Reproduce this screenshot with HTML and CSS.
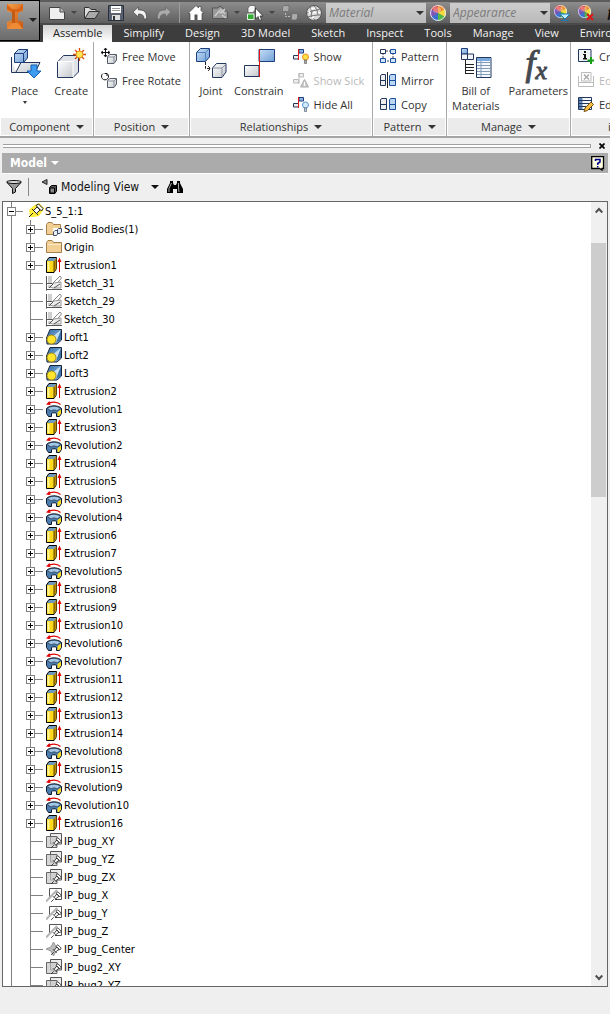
FILE: index.html
```html
<!DOCTYPE html>
<html lang="en">

<head>
    <meta charset="utf-8">
    <title>Model</title>
    <link rel="stylesheet" href="styles.css">
</head>

<body>
    <svg class="sprite" aria-hidden="true">
        <defs>
            <linearGradient id="g-blue" x1="0" y1="0" x2="1" y2="1">
                <stop offset="0" stop-color="#c8def5" />
                <stop offset="1" stop-color="#6f9fd6" />
            </linearGradient>
            <linearGradient id="g-grey" x1="0" y1="0" x2="1" y2="1">
                <stop offset="0" stop-color="#ffffff" />
                <stop offset="1" stop-color="#c3c7cc" />
            </linearGradient>
            <linearGradient id="g-orange" x1="0" y1="0" x2="1" y2="1">
                <stop offset="0" stop-color="#f6a04a" />
                <stop offset="1" stop-color="#c8560f" />
            </linearGradient>
            <linearGradient id="g-loft" x1="0" y1="0" x2="1" y2="1">
                <stop offset="0" stop-color="#2f6ca8" />
                <stop offset="1" stop-color="#9cc4e6" />
            </linearGradient>
        </defs>

        <symbol id="ball" viewBox="0 0 16 16">
            <path d="M8 8V0A8 8 0 0 1 15 4Z" fill="#f08a2c" />
            <path d="M8 8L15 4A8 8 0 0 1 15 12Z" fill="#f5dc3c" />
            <path d="M8 8L15 12A8 8 0 0 1 8 16Z" fill="#52b848" />
            <path d="M8 8V16A8 8 0 0 1 1 12Z" fill="#3b6fd0" />
            <path d="M8 8L1 12A8 8 0 0 1 1 4Z" fill="#7d55b8" />
            <path d="M8 8L1 4A8 8 0 0 1 8 0Z" fill="#dd4040" />
            <circle cx="8" cy="8" r="7.500" fill="none" stroke="#e4e8f0" />
            <ellipse cx="7" cy="5" rx="4" ry="3" fill="#fff" opacity=".3" />
        </symbol>

        <symbol id="pin" viewBox="0 0 16 16">
            <path d="M5 11L1.500 14.500M4 7L9 12M5.500 8.500L9 4L12 7L7.500 10.500M8 3L13 8L15 5.500L10.500 1Z" fill="#fff" stroke="#111" />
        </symbol>

        <symbol id="t-root" viewBox="0 0 16 16">
            <path d="M1 7L4 4L7 2L11 0L16 5L14 9L11 13L6 14H2Z" fill="#ffee3a" />
            <path d="M5 10L1 14M4 6L10 12M5.500 7.500L9 4L12 7L8.500 10.500M8 2.500L13.500 8L15 5.500L10.500 1Z" fill="#fff" stroke="#222" />
        </symbol>
        <symbol id="t-folder" viewBox="0 0 16 16">
            <path d="M.5 13.500V3.500L2 1.500H6L7.500 3.500H15.500V13.500Z" fill="#f2cf95" stroke="#a4804a" />
            <path d="M1.500 5.500H15" stroke="#fbe7c3" />
        </symbol>
        <symbol id="t-bodies" viewBox="0 0 16 16">
            <path d="M.5 13.500V3.500L2 1.500H6L7.500 3.500H14.500V13.500Z" fill="#f2cf95" stroke="#a4804a" />
            <path d="M7 7H16V16H7Z" fill="#fff" />
            <path d="M7.500 11L9 9.500H11.500V13L10.500 14.500H7.500Z" fill="#eef2fa" stroke="#3f4c66" />
            <path d="M11.500 8.500L12.500 7.500H15.500V11L14 12.500H11.500Z" fill="#dfe6f4" stroke="#3f4c66" />
        </symbol>
        <symbol id="t-extrusion" viewBox="0 0 16 16">
            <path d="M.5 4L3 .5H10.500V11.500L8 15.500H.5Z" fill="#6f98c0" stroke="#000" />
            <path d="M8 4L10.500 1V11.500L8 15Z" fill="#b98c00" />
            <path d="M1 4H8V15H1Z" fill="#ffd91c" />
            <path d="M2.500 5V14" stroke="#fff39a" stroke-width="2" />
            <path d="M8 4V15" stroke="#5c4500" />
            <path d="M13.500 15V3" stroke="#d40000" />
            <path d="M11.500 5L13.500 .5L15.500 5Z" fill="#e00000" />
        </symbol>
        <symbol id="t-sketch" viewBox="0 0 16 16">
            <path d="M.5 1V15.500M.5 14.500H16M1 8.500H9" stroke="#555" fill="none" />
            <path d="M2 1H6V8H2ZM2 10H5V13H2Z" fill="#cfcfcf" />
            <path d="M6 9L14 1L15.500 3L9 11Z" fill="#fff" stroke="#888" />
            <path d="M4 12L8 8L15 7V13H7Z" fill="#ededed" stroke="#999" />
            <path d="M3 13L7 9M8 13L14 9" stroke="#555" />
        </symbol>
        <symbol id="t-loft" viewBox="0 0 16 16">
            <path d="M4 .5H15.500V11L11 15H1L.5 9Z" fill="url(#g-loft)" stroke="#16243a" />
            <path d="M15 1L6 8L10 14Z" fill="#c5dff2" />
            <path d="M15 1V11L10 14Z" fill="#3c75ab" />
            <circle cx="5.500" cy="10.500" r="4.500" fill="#ffe42d" stroke="#a08a10" />
        </symbol>
        <symbol id="t-revolution" viewBox="0 0 16 16">
            <path d="M.5 7.500C3 4 13 4 15.500 7.500V12.500L13.500 15.500H10.500V12.500C9.500 11.500 6.500 11.500 5.500 12.500V15.500H2.500L.5 12.500Z" fill="#4a7cae" stroke="#0b1626" />
            <path d="M1.500 7.500C4 4.500 12 4.500 14.500 7.500L11 10C9 8.500 7 8.500 5 10Z" fill="#a3c8e6" stroke="#0b1626" stroke-width=".6" />
            <path d="M11.500 11L15 8.500V12.500L13 15H11.500Z" fill="#ffdf1f" />
            <path d="M2 3C5 .5 11 .5 14.500 3.500" fill="none" stroke="#e00000" stroke-width="1.200" />
            <path d="M0 3.500L3.500 0L4.500 4Z" fill="#e00000" />
        </symbol>
        <symbol id="t-plane" viewBox="0 0 16 16">
            <path d="M4.500 .5H15.500V11H4.500Z" fill="#ececec" stroke="#555" />
            <path d="M.5 3.500H11V14.500H.5Z" fill="#c4c4c4" fill-opacity=".7" stroke="#666" />
            <use href="#pin" x="4" y="4" width="12" height="12" />
        </symbol>
        <symbol id="t-axis" viewBox="0 0 16 16">
            <path d="M3.500 12V1.500H15.500V12.500H9" fill="#fff" stroke="#555" />
            <path d="M0 14.500L11 3" stroke="#b5b5b5" stroke-width="2" />
            <use href="#pin" x="4" y="4" width="12" height="12" />
        </symbol>
        <symbol id="t-point" viewBox="0 0 16 16">
            <path d="M7.500 1L10 6L15 8L10 10L7.500 15L5 10L0 8L5 6Z" fill="#bdbdbd" stroke="#999" />
            <use href="#pin" x="4" y="3" width="12" height="12" />
        </symbol>
    </svg>

    <header class="titlebar">
        <button class="app-button" aria-label="Application menu">
            <svg width="18" height="26" viewBox="0 0 18 26">
                <path d="M1 1H17V8L12 10V17L17 19V26H1V19L6 17V10L1 8Z" fill="url(#g-orange)" />
                <path d="M1 1L6 6H12L17 1V7L12 9H6L1 7Z" fill="#d76417" />
                <path d="M1 26L6 20H12L17 26Z" fill="#ef8a35" />
                <path d="M6 8H9V20H6Z" fill="#c05a14" />
            </svg>
            <i class="caret"></i>
        </button>
        <div class="title-rows">
            <div class="quick-access">
                <button class="tool" aria-label="New">
                    <svg viewBox="0 0 16 16">
                        <path d="M.5 2.500H11L15.500 7V14.500H.5Z" fill="#eee" stroke="#444" />
                        <path d="M11 2.500V7H15.500" fill="#bbb" stroke="#444" />
                    </svg>
                </button>
                <button class="drop" aria-label="New options"><i class="caret dim"></i></button>
                <button class="tool" aria-label="Open">
                    <svg viewBox="0 0 16 16">
                        <path d="M.5 13.500V2.500H5L7 4.500H12V7" fill="#ddd" stroke="#333" />
                        <path d="M1 13.500L5 6.500H15.500L11 13.500Z" fill="#aaa" stroke="#333" />
                    </svg>
                </button>
                <button class="tool" aria-label="Save">
                    <svg viewBox="0 0 16 16">
                        <path d="M.5 .5H15.500V15.500H.5Z" fill="#59626e" stroke="#27303a" />
                        <path d="M3 1H13V8H3Z" fill="#fff" />
                        <path d="M4 3.500H12M4 5.500H12" stroke="#999" />
                        <path d="M4 10H12V15H4Z" fill="#ddd" />
                        <path d="M5 11H7V15H5Z" fill="#333" />
                    </svg>
                </button>
                <button class="tool" aria-label="Undo">
                    <svg viewBox="0 0 16 16">
                        <path d="M1 7L6.500 2V5C12 4.500 15 7 14.500 14H12C12 10.500 10.500 9 6.500 9V12Z" fill="#f4f4f4" stroke="#444" stroke-width=".7" />
                    </svg>
                </button>
                <button class="tool" aria-label="Redo">
                    <svg viewBox="0 0 16 16">
                        <path d="M15 7L9.500 2V5C4 4.500 1 7 1.500 14H4C4 10.500 5.500 9 9.500 9V12Z" fill="#aaa" stroke="#666" stroke-width=".7" />
                    </svg>
                </button>
                <span class="divider"></span>
                <button class="tool" aria-label="Home">
                    <svg viewBox="0 0 16 16">
                        <path d="M0 8.500L8 .5L10.500 3V1.500H13V5.500L16 8.500H14V15.500H2V8.500Z" fill="#fff" stroke="#444" stroke-width=".7" />
                        <path d="M6.500 15V9.500H9.500V15Z" fill="#555" />
                    </svg>
                </button>
                <button class="tool" aria-label="Update">
                    <svg viewBox="0 0 16 16">
                        <path d="M.5 3H6L8 1L15.500 7V13.500H.5Z" fill="#999" stroke="#555" />
                        <path d="M3 11L7 6L9 8L13 4M10 10L14 13M8 4L13 9" fill="none" stroke="#ccc" stroke-width="1.500" />
                    </svg>
                </button>
                <button class="drop" aria-label="Update options"><i class="caret dim"></i></button>
                <button class="tool" aria-label="Select">
                    <svg viewBox="0 0 16 16">
                        <path d="M1 3L3 .5H8V5L6 7.500H1Z" fill="#f6f6f6" stroke="#555" stroke-width=".7" />
                        <path d="M.5 9H7V14.500H.5Z" fill="#35aa35" stroke="#dff5df" />
                        <path d="M8.500 3V14L11 11.500L12.500 15.500L14.500 14.500L13 11H16Z" fill="#fff" stroke="#222" stroke-width=".7" />
                    </svg>
                </button>
                <button class="drop" aria-label="Select options"><i class="caret dim"></i></button>
                <button class="tool" aria-label="Constraint">
                    <svg viewBox="0 0 16 16">
                        <path d="M.5 2L2 .5H7V5L5.500 6.500H.5Z" fill="#aaa" stroke="#666" stroke-width=".7" />
                        <path d="M9.500 10L11 8.500H15.500V13L14 15H9.500Z" fill="#aaa" stroke="#666" stroke-width=".7" />
                        <path d="M3.500 8V11.500H8" fill="none" stroke="#bbb" stroke-dasharray="2 1" />
                    </svg>
                </button>
                <button class="tool" aria-label="Material browser">
                    <svg viewBox="0 0 16 16">
                        <circle cx="8" cy="8" r="7.500" fill="#d8d8d8" stroke="#555" />
                        <path d="M4 2L6 6L1 8M6 6L11 5L14 4M11 5L12 10L15 10M6 6L5 11L9 15M5 11L12 10M8 1L11 5M2 12L5 11" fill="none" stroke="#777" />
                        <path d="M5 4L9 3M7 8L10 7M6 13L8 12M12 7L14 8M3 6L4 9" stroke="#fff" stroke-width="1.500" />
                    </svg>
                </button>
                <label class="combo">
                    <select aria-label="Material"><option>Material</option></select>
                    <i class="caret"></i>
                </label>
                <button class="tool" aria-label="Appearance browser"><svg viewBox="0 0 16 16"><use href="#ball" /></svg></button>
                <label class="combo">
                    <select aria-label="Appearance"><option>Appearance</option></select>
                    <i class="caret"></i>
                </label>
                <button class="tool" aria-label="Adjust appearance">
                    <svg viewBox="0 0 16 16">
                        <use href="#ball" width="13" height="13" />
                        <path d="M6 9H16L11 14Z" fill="#bfeeff" stroke="#1779b8" />
                        <path d="M7 15.500H15M11 13V15" stroke="#1779b8" />
                    </svg>
                </button>
                <button class="tool" aria-label="Clear appearance">
                    <svg viewBox="0 0 16 16">
                        <use href="#ball" width="13" height="13" />
                        <path d="M9 9L15 15M15 9L9 15" stroke="#e01818" stroke-width="2" />
                    </svg>
                </button>
                <button class="tool fx" aria-label="Parameters">f</button>
            </div>
            <nav class="tabs">
                <a href="#" class="active">Assemble</a>
                <a href="#">Simplify</a>
                <a href="#">Design</a>
                <a href="#">3D Model</a>
                <a href="#">Sketch</a>
                <a href="#">Inspect</a>
                <a href="#">Tools</a>
                <a href="#">Manage</a>
                <a href="#">View</a>
                <a href="#">Environments</a>
            </nav>
        </div>
    </header>

    <div class="ribbon">
        <section class="panel component">
            <div class="panel-body">
                <button class="large">
                    <svg viewBox="0 0 32 32">
                        <path d="M2.500 10V25.500H26L31 15.500H12L7 25" fill="url(#g-grey)" stroke="#23375e" />
                        <path d="M5.500 6.500L9.500 2.500H18.500V11L14.500 15.500H5.500Z" fill="url(#g-blue)" stroke="#1d3f7d" />
                        <path d="M5.500 6.500H14.500V15.500M14.500 6.500L18.500 2.500" fill="none" stroke="#1d3f7d" />
                        <path d="M22 18H28V24H32L25 31L18 24H22Z" fill="#3d9bf0" stroke="#155fae" />
                    </svg>
                    <span>Place</span>
                    <i class="caret small"></i>
                </button>
                <button class="large">
                    <svg viewBox="0 0 32 32">
                        <path d="M2.500 15L8.500 8.500H23.500V25L18 30.500H2.500Z" fill="#dfe2e6" stroke="#23375e" />
                        <path d="M3 14.500H18V30H3Z" fill="url(#g-grey)" />
                        <path d="M2.500 14.500H18L23.500 8.500M18 14.500V30" fill="none" stroke="#fff" />
                        <path d="M24.500 1V14M18 7.500H31M20 3L29 12M29 3L20 12" stroke="#d8480f" stroke-width="1.300" />
                        <circle cx="24.500" cy="7.500" r="3.500" fill="#ffe657" stroke="#e88c16" />
                    </svg>
                    <span>Create</span>
                </button>
            </div>
            <button class="panel-title">Component <i class="caret"></i></button>
        </section>

        <section class="panel position">
            <div class="panel-body">
                <div class="small-list">
                    <button>
                        <svg viewBox="0 0 16 16">
                            <path d="M4.500 .5V8.500M.5 4.500H8.500" stroke="#111" />
                            <path d="M3 2L4.500 0L6 2M3 7L4.500 9L6 7M2 3L0 4.500L2 6M7 3L9 4.500L7 6" fill="none" stroke="#111" />
                            <path d="M6.500 8.500L9 6.500H15.500V12L13 15.500H6.500Z" fill="url(#g-grey)" stroke="#555b66" />
                            <path d="M6.500 9H13V15M13 9L15.500 6.500" fill="none" stroke="#888e98" />
                        </svg>
                        Free Move
                    </button>
                    <button>
                        <svg viewBox="0 0 16 16">
                            <path d="M2 1.500A3.500 3.500 0 1 0 6 1.500M6 1.500H3.500M6 1.500V4" fill="none" stroke="#111" />
                            <path d="M6.500 8.500L9 6.500H15.500V12L13 15.500H6.500Z" fill="url(#g-grey)" stroke="#555b66" />
                            <path d="M6.500 9H13V15M13 9L15.500 6.500" fill="none" stroke="#888e98" />
                        </svg>
                        Free Rotate
                    </button>
                </div>
            </div>
            <button class="panel-title">Position <i class="caret"></i></button>
        </section>

        <section class="panel relationships">
            <div class="panel-body">
                <button class="large">
                    <svg viewBox="0 0 32 32">
                        <path d="M1.500 5.500L5.500 1.500H14.500V10L10.500 14.500H1.500Z" fill="url(#g-blue)" stroke="#1d3f7d" />
                        <path d="M1.500 5.500H10.500V14M10.500 5.500L14.500 1.500" fill="none" stroke="#4f7fbe" />
                        <path d="M17.500 21L21.500 16.500H31V25L27 30.500H17.500Z" fill="url(#g-grey)" stroke="#23375e" />
                        <path d="M18 21H27V30M27 21L31 17" fill="none" stroke="#8b93a3" />
                        <path d="M10.500 15V21.500H15M13 19L15.500 21.500L13 24" fill="none" stroke="#222" stroke-dasharray="3 1" />
                    </svg>
                    <span>Joint</span>
                </button>
                <button class="large">
                    <svg viewBox="0 0 32 32">
                        <path d="M16 2.500H31.500V14.500H16Z" fill="url(#g-blue)" stroke="#1d3f7d" />
                        <path d="M1.500 18.500H16V29.500H1.500Z" fill="url(#g-grey)" stroke="#23375e" />
                        <path d="M16.500 2V30" stroke="#e81414" />
                    </svg>
                    <span>Constrain</span>
                </button>
                <div class="small-list">
                    <button>
                        <svg viewBox="0 0 16 16">
                            <path d="M6 1.500H10.500V5H6Z" fill="#8fb5e4" stroke="#1d3f7d" />
                            <path d="M.5 7.500H5.500V11H.5Z" fill="#eee" stroke="#23375e" />
                            <path d="M5.500 1V12" stroke="#e81414" />
                            <circle cx="12.500" cy="9" r="3" fill="#ffe14a" stroke="#f09018" />
                            <path d="M11.500 12H13.500V15.500H11.500Z" fill="#aaa" stroke="#555" stroke-width=".6" />
                        </svg>
                        Show
                    </button>
                    <button disabled>
                        <svg viewBox="0 0 16 16">
                            <path d="M6 1.500H10.500V5H6ZM.5 7.500H5.500V11H.5ZM6 1V12" fill="#eee" stroke="#bbb" />
                            <path d="M11.500 7.500L15.500 15H7.500Z" fill="#ccc" stroke="#aaa" />
                            <path d="M11.500 10V14" stroke="#fff" />
                        </svg>
                        Show Sick
                    </button>
                    <button>
                        <svg viewBox="0 0 16 16">
                            <path d="M6 1.500H10.500V5H6Z" fill="#8fb5e4" stroke="#1d3f7d" />
                            <path d="M.5 7.500H5.500V11H.5Z" fill="#eee" stroke="#23375e" />
                            <path d="M5.500 1V12" stroke="#e81414" />
                            <circle cx="12.500" cy="9" r="3" fill="#d3eafc" stroke="#5a95d2" />
                            <path d="M11.500 12H13.500V15.500H11.500Z" fill="#bcd" stroke="#456" stroke-width=".6" />
                        </svg>
                        Hide All
                    </button>
                </div>
            </div>
            <button class="panel-title">Relationships <i class="caret"></i></button>
        </section>

        <section class="panel pattern">
            <div class="panel-body">
                <div class="small-list">
                    <button>
                        <svg viewBox="0 0 16 16">
                            <path d="M3 3H13V13H3Z" fill="none" stroke="#445" stroke-dasharray="2 1" />
                            <path d="M.5 1.500H5.500V5.500H.5Z" fill="#fff" stroke="#23375e" />
                            <path d="M10.500 1.500H15.500V5.500H10.500ZM.5 10.500H5.500V14.500H.5ZM10.500 10.500H15.500V14.500H10.500Z" fill="#cfe2f8" stroke="#1c4f9c" />
                        </svg>
                        Pattern
                    </button>
                    <button>
                        <svg viewBox="0 0 16 16">
                            <path d="M.5 3.500L2 2.500H5.500V13.500H.5ZM.5 8.500H5.500" fill="#eee" stroke="#23375e" />
                            <path d="M9.500 3.500L11 2.500H15.500V13.500H9.500ZM9.500 8.500H15.500" fill="#bcd6f5" stroke="#1c4f9c" />
                            <path d="M7.500 0V16" stroke="#222" />
                        </svg>
                        Mirror
                    </button>
                    <button>
                        <svg viewBox="0 0 16 16">
                            <path d="M.5 3.500L2 2.500H6.500V13.500H.5ZM.5 8.500H6.500" fill="#eee" stroke="#23375e" />
                            <path d="M9.500 3.500L11 2.500H15.500V13.500H9.500ZM9.500 8.500H15.500" fill="#bcd6f5" stroke="#1c4f9c" />
                        </svg>
                        Copy
                    </button>
                </div>
            </div>
            <button class="panel-title">Pattern <i class="caret"></i></button>
        </section>

        <section class="panel manage">
            <div class="panel-body">
                <button class="large">
                    <svg viewBox="0 0 32 32">
                        <path d="M1.500 1.500H7.500V7H1.500Z" fill="url(#g-blue)" stroke="#1d3f7d" />
                        <path d="M1.500 7H7.500V12.500H1.500ZM7.500 7H13.500V12.500H7.500Z" fill="#f2f4f7" stroke="#23375e" />
                        <path d="M5.500 13V27M5.500 17.500H14M5.500 20.500H14M5.500 23.500H14M5.500 26.500H14" fill="none" stroke="#222" />
                        <path d="M16.500 10.500H31V30.500H16.500Z" fill="#f4f8fc" stroke="#23375e" />
                        <path d="M17 11H30.500V14H17Z" fill="#7aa8dc" />
                        <path d="M17 15.500H31M17 18.500H31M17 21.500H31M17 24.500H31M17 27.500H31M21 14V30" stroke="#809ab8" />
                    </svg>
                    <span>Bill of<br>Materials</span>
                </button>
                <button class="large">
                    <span class="fx-big">f<sub>x</sub></span>
                    <span>Parameters</span>
                </button>
            </div>
            <button class="panel-title">Manage <i class="caret"></i></button>
        </section>

        <section class="panel ilogic">
            <div class="panel-body">
                <div class="small-list">
                    <button>
                        <svg viewBox="0 0 16 16">
                            <path d="M.5 1.500H13V13.500H.5Z" fill="#eef1f5" stroke="#23375e" />
                            <path d="M6 3H8V5H6ZM5 6H8V10H9V11.500H5V10H6V7H5Z" fill="#111" />
                            <path d="M13 9V16M9.500 12.500H16" stroke="#16a016" stroke-width="2" />
                        </svg>
                        Create Rule
                    </button>
                    <button disabled>
                        <svg viewBox="0 0 16 16">
                            <path d="M3.500 .5H13V9H3.500ZM.5 4V14.500H15.500V4M.5 10.500H15.500" fill="none" stroke="#bbb" />
                            <path d="M6 2.500L11 7.500M11 2.500L6 7.500" stroke="#aaa" stroke-width="1.500" />
                        </svg>
                        Edit
                    </button>
                    <button>
                        <svg viewBox="0 0 16 16">
                            <path d="M.5 1.500H13.500V13.500H.5Z" fill="#f4f8fc" stroke="#23375e" />
                            <path d="M1 2H4.500V13H1Z" fill="#5e86b8" />
                            <path d="M1 4.500H13M1 7.500H13M1 10.500H13" stroke="#23375e" />
                            <path d="M6 15.500L7 12L13 6L15.500 8.500L9.500 14.500Z" fill="#f7bf45" stroke="#754c10" />
                        </svg>
                        Edit
                    </button>
                </div>
            </div>
            <button class="panel-title">iLogic</button>
        </section>
    </div>

    <main class="browser">
        <div class="dock-strip">
            <span class="gripper"></span>
            <button aria-label="Close">
                <svg width="6" height="6" viewBox="0 0 6 6"><path d="M.5 .5L5.500 5.500M5.500 .5L.5 5.500" stroke="#000" stroke-width="1.700" /></svg>
            </button>
        </div>
        <div class="browser-title">
            <button class="model-menu">Model <i class="caret"></i></button>
            <button class="help" aria-label="Help">
                <svg width="14" height="15" viewBox="0 0 14 15">
                    <path d="M.7 .7H12.500V12.500H11V14L8.500 12.500H.7Z" fill="#fffde0" stroke="#000" stroke-width="1.300" />
                    <path d="M4.500 5V3.500H9V6L6.700 7.500V9M6.700 10V11.500" fill="none" stroke="#00008b" stroke-width="1.500" />
                </svg>
            </button>
        </div>
        <div class="browser-tools">
            <button aria-label="Filter">
                <svg width="16" height="14" viewBox="0 0 16 14">
                    <path d="M1 2.500L6.500 8.500V13.500L9.500 12V8.500L15 2.500Z" fill="#999" stroke="#111" />
                    <ellipse cx="8" cy="2" rx="7.500" ry="1.500" fill="#ddd" stroke="#111" />
                </svg>
            </button>
            <span class="divider"></span>
            <button class="view-menu">
                <svg width="16" height="16" viewBox="0 0 16 16">
                    <path d="M1 3L6 .5V5.500Z" fill="#888" stroke="#222" />
                    <path d="M8.500 8.500L10.500 6.500H15.500V12L14 14.500H8.500Z" fill="#555" stroke="#000" />
                    <path d="M9 9H13.500V14H9Z" fill="#888" stroke="#000" />
                </svg>
                <span>Modeling View</span>
                <i class="caret"></i>
            </button>
            <button aria-label="Find">
                <svg width="16" height="14" viewBox="0 0 16 14">
                    <path d="M3 1H6V3L7 5H9L10 3V1H13V3L16 9V13H10V9H6V13H0V9L3 3Z" fill="#000" />
                    <path d="M4.500 3L2 8.500V12M11.500 3V7L12 12" fill="none" stroke="#aaa" />
                </svg>
            </button>
        </div>
        <div class="tree-box">
            <div class="tree">
                <div class="row root">
                    <button class="expander open" aria-label="Collapse"></button>
                    <svg><use href="#t-root" /></svg>
                    <span>S_5_1:1</span>
                </div>
                <ul id="features"></ul>
            </div>
            <div class="scrollbar">
                <button aria-label="Scroll up"><svg width="8" height="7" viewBox="0 0 8 7"><path d="M.7 5.500L4 2L7.300 5.500" fill="none" stroke="#505050" stroke-width="2" /></svg></button>
                <span class="track-above"></span>
                <span class="thumb"></span>
                <span class="track-below"></span>
                <button aria-label="Scroll down"><svg width="8" height="7" viewBox="0 0 8 7"><path d="M.7 1.500L4 5L7.300 1.500" fill="none" stroke="#505050" stroke-width="2" /></svg></button>
            </div>
        </div>
    </main>

    <script src="script.js"></script>
</body>

</html>
```

FILE: styles.css
```css
* {
    box-sizing: border-box;
}

body {
    margin: 0;
    height: 100vh;
    display: flex;
    flex-direction: column;
    overflow: hidden;
    background-color: #efefef;
    font-family: "Open Sans", "Noto Sans", sans-serif;
    font-size: 11px;
    color: #333;
}

button {
    margin: 0;
    padding: 0;
    border: none;
    background: none;
    font: inherit;
    color: inherit;
    white-space: nowrap;
}

svg {
    display: block;
    flex: none;
}

.sprite {
    position: absolute;
    width: 0;
    height: 0;
}

.caret {
    display: inline-block;
    flex: none;
    border: 4px solid transparent;
    border-top-color: currentColor;
    border-bottom: none;
}

.caret.dim {
    border-width: 3px;
    border-bottom: none;
    color: #444;
}

.caret.small {
    border-width: 2px;
    border-top-width: 3px;
    border-bottom: none;
}

/* title bar */
.titlebar {
    display: flex;
    flex: none;
    height: 42px;
    background-color: #3d3d3d;
}

.app-button {
    width: 40px;
    height: 41px;
    flex: none;
    display: flex;
    gap: 5px;
    padding: 2px 0 0 6px;
    border: 1px solid #000;
    border-left: none;
    background: linear-gradient(#a5a5a5, #6b6b6b);
    color: #222;
}

.app-button .caret {
    margin-top: 15px;
}

.title-rows {
    flex: 1;
    min-width: 0;
}

.quick-access {
    display: flex;
    align-items: center;
    height: 25px;
    padding-left: 5px;
    border-top: 2px solid #5c5c5c;
    border-bottom: 2px solid #4a4a4a;
    background: linear-gradient(#8d8d8d, #5f5f5f);
    overflow: hidden;
}

.tool {
    width: 24px;
    height: 21px;
    flex: none;
    padding: 0 4px;
}

.tool svg {
    width: 16px;
    height: 16px;
}

.drop {
    width: 11px;
    flex: none;
    display: flex;
    padding-left: 2px;
}

.quick-access .divider {
    width: 1px;
    height: 21px;
    flex: none;
    margin: 0 4px 0 3px;
    background-color: #9c9c9c;
}

.combo {
    position: relative;
    width: 100px;
    height: 20px;
    flex: none;
}

.combo select {
    appearance: none;
    width: 100%;
    height: 20px;
    padding: 0 3px;
    border: none;
    border-radius: 0;
    background: linear-gradient(#cdcdcd, #bababa);
    color: #7b7b7b;
    font: italic 12px "Open Sans", sans-serif;
}

.combo .caret {
    position: absolute;
    right: 2px;
    top: 8px;
    color: #333;
}

.fx {
    font: italic bold 15px "Liberation Serif", serif;
    color: #111;
}

.tabs {
    display: flex;
    gap: 1px;
    height: 17px;
    padding-left: 3px;
    overflow: hidden;
}

.tabs a {
    flex: none;
    padding: 0 10px;
    line-height: 16px;
    color: #f2f2f2;
    text-decoration: none;
    white-space: nowrap;
}

.tabs .active {
    background: linear-gradient(#d2d2d2, #fff);
    color: #222;
}

/* ribbon */
.ribbon {
    display: flex;
    flex: none;
    height: 96px;
    background-color: #fff;
    border-bottom: 2px solid #a5a5a5;
    overflow: hidden;
}

.panel {
    display: flex;
    flex-direction: column;
    flex: none;
    border-right: 1px solid #a8a8a8;
}

.component {
    width: 94px;
}

.position {
    width: 96px;
}

.relationships {
    width: 183px;
}

.pattern {
    width: 74px;
}

.manage {
    width: 124px;
}

.ilogic {
    width: 104px;
}

.panel-body {
    display: flex;
    gap: 3px;
    height: 76px;
    padding: 2px 0 0 3px;
}

.panel-title {
    display: flex;
    justify-content: center;
    align-items: center;
    gap: 6px;
    height: 17px;
    margin: 0 1px;
    background-color: #ebebeb;
}

.large {
    display: flex;
    flex-direction: column;
    align-items: center;
    padding: 3px 2px 0;
    line-height: 15px;
}

.component .large {
    width: 44px;
}

.large svg {
    width: 32px;
    height: 32px;
    margin-bottom: 4px;
}

.large .caret {
    margin-top: 3px;
}

.fx-big {
    height: 36px;
    padding-right: 4px;
    font: italic 36px/32px "Liberation Serif", serif;
    color: #454a50;
    -webkit-text-stroke: 1px #454a50;
}

.fx-big sub {
    font-size: 26px;
    line-height: 0;
    vertical-align: -4px;
}

.manage .panel-body {
    gap: 5px;
}

.small-list {
    padding-left: 4px;
}

.small-list button {
    display: flex;
    align-items: center;
    gap: 5px;
    height: 24px;
}

.small-list button:disabled {
    color: #b9b9b9;
}

.small-list svg {
    width: 16px;
    height: 16px;
}

/* model browser */
.browser {
    flex: 1;
    min-height: 0;
    display: flex;
    flex-direction: column;
    padding: 3px 2px 27px;
}

.dock-strip {
    display: flex;
    align-items: center;
    gap: 8px;
    height: 10px;
    margin-bottom: 2px;
    padding: 0 3px 0 1px;
}

.gripper {
    flex: 1;
    height: 4px;
    border: 1px solid #a0a0a0;
    border-left: none;
    background-color: #fff;
}

.browser-title {
    display: flex;
    justify-content: space-between;
    align-items: center;
    height: 21px;
    padding: 0 3px 0 8px;
    background-color: #ababab;
    border-bottom: 1px solid #fff;
}

.model-menu {
    font: bold 12px "DejaVu Sans Condensed", sans-serif;
    color: #fff;
}

.model-menu .caret {
    vertical-align: 2px;
}

.browser-tools {
    display: flex;
    align-items: center;
    height: 27px;
    padding: 0 0 2px 4px;
    color: #111;
}

.browser-tools .divider {
    width: 1px;
    height: 18px;
    margin: 0 12px 0 6px;
    background-color: #888;
}

.view-menu {
    display: flex;
    align-items: center;
    gap: 4px;
    margin-right: 8px;
    font: 12px "DejaVu Sans Condensed", sans-serif;
}

.view-menu .caret {
    margin-left: 8px;
}

.tree-box {
    display: flex;
    flex: 1;
    min-height: 0;
    border: 1px solid #666;
    background-color: #fff;
}

.tree {
    position: relative;
    flex: 1;
    overflow: hidden;
    font: 11px "DejaVu Sans Condensed", sans-serif;
    color: #000;
}

/* trunk line of the whole assembly */
.tree::before {
    content: "";
    position: absolute;
    left: 8px;
    top: 0;
    bottom: 0;
    border-left: 1px solid #808080;
}

.tree ul {
    list-style: none;
    margin: 0 0 0 27px;
    padding: 0;
    border-left: 1px solid #808080;
}

.row {
    display: flex;
    align-items: center;
    height: 18px;
    white-space: nowrap;
}

.row::before {
    content: "";
    width: 12px;
    height: 1px;
    flex: none;
    margin-right: 3px;
    background-color: #808080;
}

.row svg {
    width: 16px;
    height: 16px;
    margin-right: 2px;
}

.root {
    padding-left: 8px;
}

.root::before {
    margin-right: 5px;
}

.root svg {
    margin-right: 1px;
}

.expander {
    position: absolute;
    width: 9px;
    height: 9px;
    margin-left: -5px;
    border: 1px solid #808080;
    background: linear-gradient(#000, #000) center / 5px 1px no-repeat,
        linear-gradient(#000, #000) center / 1px 5px no-repeat,
        #fff;
}

.expander.open {
    margin-left: -4px;
    background: linear-gradient(#000, #000) center / 5px 1px no-repeat, #fff;
}

.scrollbar {
    display: flex;
    flex-direction: column;
    width: 16px;
    padding-right: 1px;
    background-color: #f0f0f0;
}

.scrollbar button {
    display: flex;
    justify-content: center;
    align-items: center;
    height: 17px;
}

.track-above {
    flex: 24;
}

.thumb {
    flex: 254;
    background-color: #cdcdcd;
}

.track-below {
    flex: 472;
}
```

FILE: script.js
```js
// [icon, label] for every node under the part
var features = [
    ["bodies", "Solid Bodies(1)"],
    ["folder", "Origin"],
    ["extrusion", "Extrusion1"],
    ["sketch", "Sketch_31"],
    ["sketch", "Sketch_29"],
    ["sketch", "Sketch_30"],
    ["loft", "Loft1"],
    ["loft", "Loft2"],
    ["loft", "Loft3"],
    ["extrusion", "Extrusion2"],
    ["revolution", "Revolution1"],
    ["extrusion", "Extrusion3"],
    ["revolution", "Revolution2"],
    ["extrusion", "Extrusion4"],
    ["extrusion", "Extrusion5"],
    ["revolution", "Revolution3"],
    ["revolution", "Revolution4"],
    ["extrusion", "Extrusion6"],
    ["extrusion", "Extrusion7"],
    ["revolution", "Revolution5"],
    ["extrusion", "Extrusion8"],
    ["extrusion", "Extrusion9"],
    ["extrusion", "Extrusion10"],
    ["revolution", "Revolution6"],
    ["revolution", "Revolution7"],
    ["extrusion", "Extrusion11"],
    ["extrusion", "Extrusion12"],
    ["extrusion", "Extrusion13"],
    ["extrusion", "Extrusion14"],
    ["revolution", "Revolution8"],
    ["extrusion", "Extrusion15"],
    ["revolution", "Revolution9"],
    ["revolution", "Revolution10"],
    ["extrusion", "Extrusion16"],
    ["plane", "IP_bug_XY"],
    ["plane", "IP_bug_YZ"],
    ["plane", "IP_bug_ZX"],
    ["axis", "IP_bug_X"],
    ["axis", "IP_bug_Y"],
    ["axis", "IP_bug_Z"],
    ["point", "IP_bug_Center"],
    ["plane", "IP_bug2_XY"],
    ["plane", "IP_bug2_YZ"]
];

// these have no children, so no plus box
var leaves = ["sketch", "plane", "axis", "point"];

var list = document.getElementById("features");

features.forEach(function (feature) {
    var row = document.createElement("li");
    var expander = leaves.includes(feature[0]) ? "" : `<button class="expander" aria-label="Expand"></button>`;
    row.className = "row";
    row.innerHTML = `
        ${expander}
        <svg><use href="#t-${feature[0]}" /></svg>
        <span>${feature[1]}</span>
    `;
    list.appendChild(row);
});
```
